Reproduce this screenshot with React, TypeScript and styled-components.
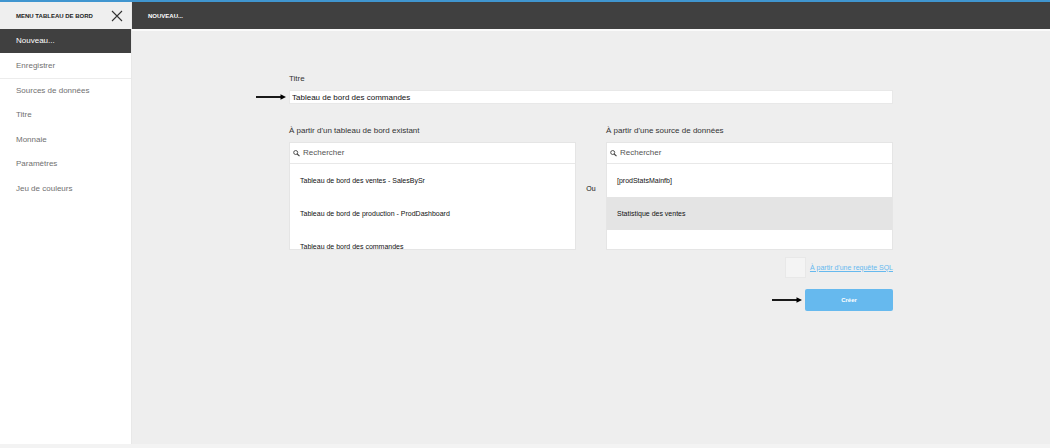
import React, { useState } from "react";
import styled, { createGlobalStyle } from "styled-components";

const GlobalStyle = createGlobalStyle`
  *, *::before, *::after { box-sizing: border-box; }
  body {
    margin: 0;
    background: #f3f3f3;
    color: #333;
    font-family: "Liberation Sans", Arial, sans-serif;
    font-size: 8px;
    line-height: 12px;
  }
  button, input { font: inherit; color: inherit; margin: 0; border: 0; border-radius: 0; }
  button { cursor: pointer; }
`;

const Page = styled.div`
  display: flex;
  min-height: 100vh;
  border-top: 2px solid #4096d0;
  border-bottom: 4px solid #f3f3f3;
`;

const Sidebar = styled.aside`
  flex: 0 0 132px;
  display: flex;
  flex-direction: column;
  background: #fff;
  border-right: 1px solid #e8e8e8;
`;

const SidebarHeader = styled.div`
  display: flex;
  align-items: center;
  justify-content: space-between;
  height: 27px;
  padding: 0 7px 0 16px;
  background: #efefef;
`;

const SidebarTitle = styled.h2`
  margin: 0;
  color: #222;
  font-size: 6px;
  font-weight: 700;
`;

const CloseButton = styled.button`
  display: flex;
  padding: 1px;
  background: none;
  color: #333;
`;

const Menu = styled.nav`
  display: flex;
  flex-direction: column;
  height: 172px;
`;

const MenuItem = styled.button<{ $active?: boolean; $divided?: boolean }>`
  flex: 1;
  padding: 0 16px;
  text-align: left;
  background: ${(p) => (p.$active ? "#404040" : "#fff")};
  color: ${(p) => (p.$active ? "#fff" : "#707070")};
  border-bottom: ${(p) => (p.$divided ? "1px solid #ececec" : "0")};
`;

const Main = styled.main`
  flex: 1;
  min-width: 0;
  background: #eee;
`;

const TopBar = styled.header`
  display: flex;
  align-items: center;
  height: 29px;
  padding: 0 16px;
  background: #404040;
  border-bottom: 2px solid #fafafa;
`;

const TopTitle = styled.h1`
  margin: 0;
  color: #fff;
  font-size: 6px;
  font-weight: 700;
`;

const Form = styled.form`
  width: 100%;
  max-width: 604px;
  margin: 0 auto;
  padding: 42px 0 24px;
`;

const Label = styled.label`
  display: block;
  margin-bottom: 5px;
`;

const Anchor = styled.div`
  position: relative;
`;

const TitleInput = styled.input`
  display: block;
  width: 100%;
  height: 14px;
  padding: 0 2px;
  background: #fff;
  border: 1px solid #e8e8e8;
  color: #111;
  outline: 0;
`;

const Sources = styled.div`
  display: flex;
  align-items: center;
  margin-top: 21px;
`;

const Source = styled.section`
  flex: 1;
  min-width: 0;
`;

const Or = styled.span`
  flex: 0 0 30px;
  padding-top: 2px;
  text-align: center;
  font-size: 7px;
  color: #111;
`;

const Panel = styled.div`
  height: 108px;
  overflow: hidden;
  background: #fff;
  border: 1px solid #e5e5e5;
`;

const Search = styled.div`
  display: flex;
  align-items: center;
  gap: 3px;
  height: 21px;
  padding: 0 3px;
  border-bottom: 1px solid #e8e8e8;
  color: #444;
`;

const SearchInput = styled.input`
  flex: 1;
  min-width: 0;
  padding: 0;
  background: none;
  outline: 0;
  &::placeholder { color: #555; opacity: 1; }
`;

const Options = styled.ul`
  margin: 0;
  padding: 0;
  list-style: none;
`;

const Option = styled.button<{ $selected: boolean }>`
  display: block;
  width: 100%;
  height: 33px;
  padding: 0 10px;
  text-align: left;
  font-size: 7px;
  color: #111;
  background: ${(p) => (p.$selected ? "#e4e4e4" : "#fff")};
`;

const SqlRow = styled.div`
  display: flex;
  align-items: center;
  justify-content: flex-end;
  gap: 4px;
  margin-top: 7px;
`;

const SqlCheck = styled.input`
  appearance: none;
  width: 21px;
  height: 21px;
  background: #f4f4f4;
  border: 1px solid #e8e8e8;
  &:checked { background: #66b9ee; }
`;

const SqlLink = styled.a`
  color: #66b9ee;
  font-size: 7px;
  text-decoration: underline;
`;

const Actions = styled.div`
  display: flex;
  justify-content: flex-end;
  margin-top: 11px;
`;

const CreateButton = styled.button`
  display: block;
  width: 88px;
  height: 22px;
  padding: 0;
  border-radius: 2px;
  background: #66b9ee;
  color: #fff;
  font-size: 6px;
  font-weight: 700;
`;

const Pointer = styled.svg`
  position: absolute;
  right: 100%;
  top: 50%;
  width: 30px;
  height: 6px;
  margin: -3px 3px 0 0;
`;

const Arrow = () => (
  <Pointer viewBox="0 0 30 6" aria-hidden="true">
    <path d="M0 3H26" stroke="#000" strokeWidth="1.8" />
    <path d="M24.5 0.3L30 3L24.5 5.7Z" fill="#000" />
  </Pointer>
);

const menu = ["Nouveau...", "Enregistrer", "Sources de données", "Titre", "Monnaie", "Paramètres", "Jeu de couleurs"];

interface PickerProps {
  id: string;
  label: string;
  options: string[];
  initial?: string;
}

function Picker({ id, label, options, initial }: PickerProps) {
  const [selected, setSelected] = useState(initial);
  return (
    <Source>
      <Label htmlFor={id}>{label}</Label>
      <Panel>
        <Search>
          <svg width="7" height="7" viewBox="0 0 7 7" fill="none" stroke="currentColor" aria-hidden="true">
            <circle cx="2.7" cy="2.5" r="2" strokeWidth="0.9" />
            <path d="M4.2 4L6.5 6.2" strokeWidth="1.1" />
          </svg>
          <SearchInput id={id} type="text" placeholder="Rechercher" />
        </Search>
        <Options>
          {options.map((name) => (
            <li key={name}>
              <Option type="button" $selected={name === selected} onClick={() => setSelected(name)}>
                {name}
              </Option>
            </li>
          ))}
        </Options>
      </Panel>
    </Source>
  );
}

export default function App() {
  return (
    <>
      <GlobalStyle />
      <Page>
        <Sidebar>
          <SidebarHeader>
            <SidebarTitle>MENU TABLEAU DE BORD</SidebarTitle>
            <CloseButton type="button" aria-label="Fermer">
              <svg width="12" height="12" viewBox="0 0 12 12" stroke="currentColor" strokeWidth="1.1" aria-hidden="true">
                <path d="M1 1L11 11M11 1L1 11" />
              </svg>
            </CloseButton>
          </SidebarHeader>
          <Menu>
            {menu.map((name, i) => (
              <MenuItem key={name} type="button" $active={i === 0} $divided={i === 1}>
                {name}
              </MenuItem>
            ))}
          </Menu>
        </Sidebar>
        <Main>
          <TopBar>
            <TopTitle>NOUVEAU...</TopTitle>
          </TopBar>
          <Form onSubmit={(e) => e.preventDefault()}>
            <Label htmlFor="titre">Titre</Label>
            <Anchor>
              <TitleInput id="titre" type="text" defaultValue="Tableau de bord des commandes" />
              <Arrow />
            </Anchor>
            <Sources>
              <Picker
                id="existant"
                label="À partir d'un tableau de bord existant"
                options={[
                  "Tableau de bord des ventes - SalesBySr",
                  "Tableau de bord de production - ProdDashboard",
                  "Tableau de bord des commandes",
                ]}
              />
              <Or>Ou</Or>
              <Picker
                id="source"
                label="À partir d'une source de données"
                options={["[prodStatsMainfb]", "Statistique des ventes"]}
                initial="Statistique des ventes"
              />
            </Sources>
            <SqlRow>
              <SqlCheck id="sql" type="checkbox" aria-labelledby="sql-link" />
              <SqlLink id="sql-link" href="#sql">À partir d'une requête SQL</SqlLink>
            </SqlRow>
            <Actions>
              <Anchor>
                <CreateButton type="submit">Créer</CreateButton>
                <Arrow />
              </Anchor>
            </Actions>
          </Form>
        </Main>
      </Page>
    </>
  );
}
